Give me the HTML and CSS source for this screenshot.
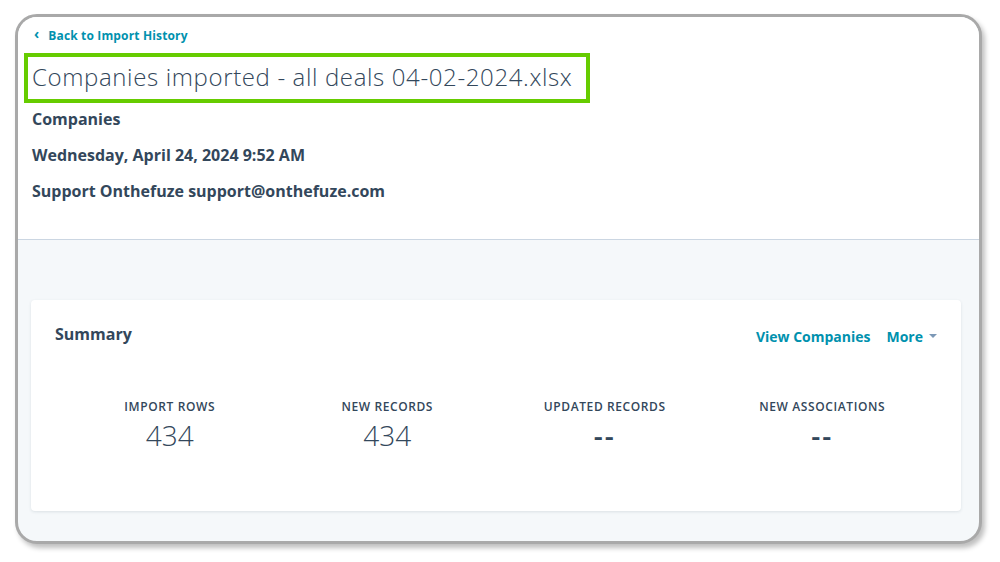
FILE: index.html
```html
<!DOCTYPE html>
<html>
<head>
<meta charset="utf-8">
<link rel="stylesheet" href="styles.css">
</head>
<body>
<div class="window">
  <header class="head">
    <a class="back" href="#"><span class="chev">&#8249;</span>Back to Import History</a>
    <div class="title-box"><h1 class="title">Companies imported - all deals 04-02-2024.xlsx</h1></div>
    <div class="meta">Companies</div>
    <div class="meta">Wednesday, April 24, 2024 9:52 AM</div>
    <div class="meta">Support Onthefuze support@onthefuze.com</div>
  </header>
  <main class="body">
    <section class="card">
      <div class="card-top">
        <h2 class="card-title">Summary</h2>
        <div class="actions">
          <a class="link" href="#">View Companies</a>
          <a class="link more" href="#">More<span class="caret"></span></a>
        </div>
      </div>
      <div class="stats">
        <div class="stat"><div class="label">Import rows</div><div class="value">434</div></div>
        <div class="stat"><div class="label">New records</div><div class="value">434</div></div>
        <div class="stat"><div class="label">Updated records</div><div class="value dash">--</div></div>
        <div class="stat"><div class="label">New associations</div><div class="value dash">--</div></div>
      </div>
    </section>
  </main>
</div>
</body>
</html>
```
FILE: styles.css
```css
* { box-sizing: border-box; }
html, body { margin: 0; padding: 0; background: #fff; }
body {
  width: 1000px;
  height: 562px;
  overflow: hidden;
  padding: 14px 18px 0 15px;
  font-family: "Open Sans", "Liberation Sans", sans-serif;
  color: #33475b;
}
.window {
  width: 967px;
  height: 530px;
  border: 3px solid #a9a9a9;
  border-radius: 22px;
  overflow: hidden;
  background: #f5f8fa;
  box-shadow: 3px 4px 5px rgba(0,0,0,0.25);
  display: flex;
  flex-direction: column;
}
.head {
  background: #fff;
  height: 223px;
  border-bottom: 1px solid #cbd6e2;
  padding: 6px 0 0 14px;
}
.back {
  display: inline-flex;
  align-items: center;
  color: #0091ae;
  font-size: 12px;
  font-weight: 700;
  letter-spacing: 0.15px;
  text-decoration: none;
  height: 16px;
}
.chev { font-size: 14px; margin-right: 9px; margin-left: 2px; line-height: 1; position: relative; top: -1px; }
.title-box {
  margin: 8px 0 0 -8px;
  width: 566px;
  height: 50px;
  border: 4px solid #66cc00;
  display: flex;
  align-items: center;
  padding-left: 4px;
}
.title {
  margin: 0;
  font-size: 24px;
  font-weight: 300;
  color: #33475b;
  letter-spacing: 0.63px;
  white-space: nowrap;
  position: relative;
  top: -2px;
}
.meta {
  font-size: 16px;
  font-weight: 700;
  line-height: 22px;
  margin-top: 5px;
  height: 30px;
}
.meta + .meta { margin-top: 6px; }
.body {
  flex: 1;
  padding: 60px 18px 0 13px;
}
.card {
  background: #fff;
  border-radius: 4px;
  box-shadow: 0 1px 3px rgba(45,62,80,0.12);
  height: 211px;
  padding: 22px 24px 0 24px;
}
.card-top {
  display: flex;
  justify-content: space-between;
  align-items: center;
  height: 24px;
}
.card-title { margin: 0; font-size: 16px; font-weight: 700; }
.actions { display: flex; gap: 16px; align-items: center; padding-top: 4px; }
.link { color: #0091ae; font-size: 14px; font-weight: 700; text-decoration: none; }
.more { display: inline-flex; align-items: center; }
.caret {
  width: 0; height: 0;
  border-left: 4px solid transparent;
  border-right: 4px solid transparent;
  border-top: 4px solid #7c98b6;
  margin-left: 6px;
}
.stats {
  display: grid;
  grid-template-columns: repeat(4, 1fr);
  margin: 53px 6px 0 6px;
}
.stat { text-align: center; }
.label {
  font-size: 12px;
  font-weight: 600;
  text-transform: uppercase;
  letter-spacing: 0.6px;
  line-height: 16px;
}
.value {
  font-size: 28px;
  font-weight: 300;
  line-height: 34px;
  margin-top: 3px;
}
.dash { letter-spacing: 2px; font-weight: 600; }
```
